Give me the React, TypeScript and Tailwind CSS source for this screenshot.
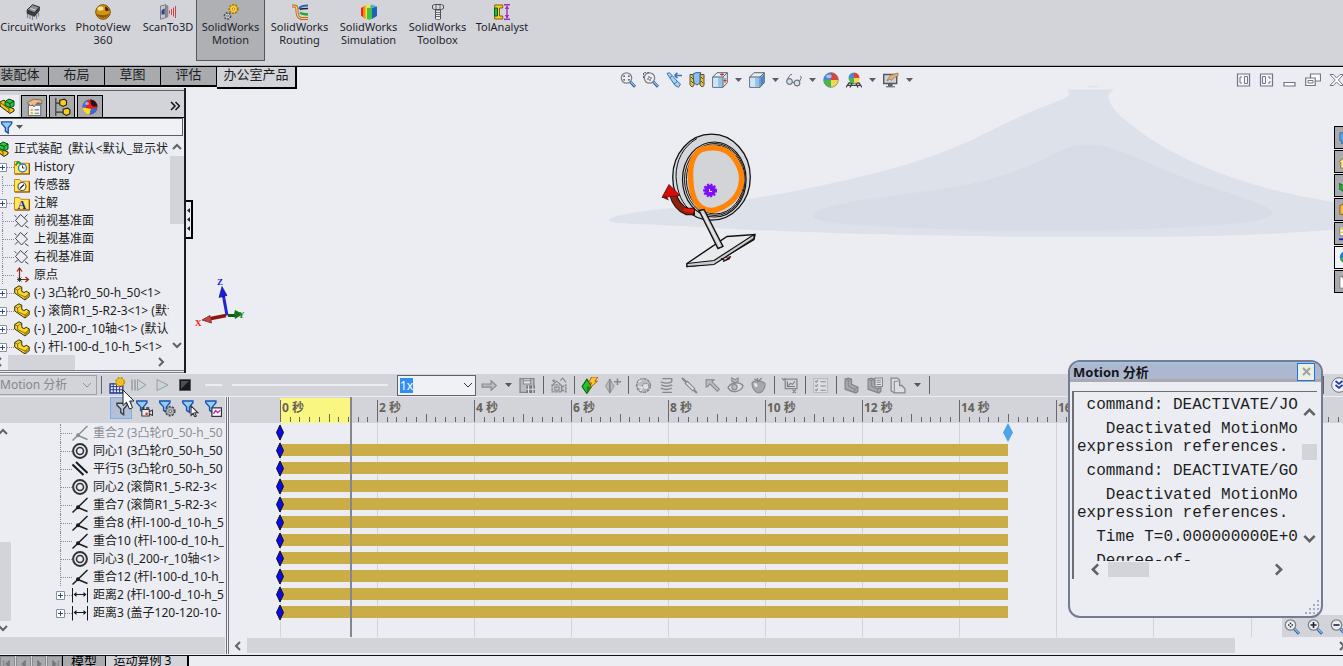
import React from "react";

type Kids = { children?: React.ReactNode };

function Ico({ children, s = 16 }: Kids & { s?: number }) {
  return (
    <svg width={s} height={s} viewBox="0 0 16 16" className="shrink-0" aria-hidden="true">
      {children}
    </svg>
  );
}

const Caret = ({ dark = false }: { dark?: boolean }) => (
  <svg width="7" height="4" viewBox="0 0 7 4" className="shrink-0" aria-hidden="true">
    <path d="M0 0h7L3.5 4z" fill={dark ? "#55575c" : "#5c5e63"} />
  </svg>
);

function Chevron({ dir, s = 10, w = 2, color = "#606267" }: { dir: "u" | "d" | "l" | "r"; s?: number; w?: number; color?: string }) {
  const d = { u: "M1 7l4-4 4 4", d: "M1 3l4 4 4-4", l: "M7 1L3 5l4 4", r: "M3 1l4 4-4 4" }[dir];
  return (
    <svg width={s} height={s} viewBox="0 0 10 10" className="shrink-0" aria-hidden="true">
      <path d={d} fill="none" stroke={color} strokeWidth={w} />
    </svg>
  );
}

/* ---------- shared drawings ---------- */

const Gear = ({ cx, cy, r, fill, edge }: { cx: number; cy: number; r: number; fill: string; edge: string }) => (
  <g>
    <circle cx={cx} cy={cy} r={r} fill={fill} stroke={edge} strokeWidth="1.8" strokeDasharray="1.8 1.2" />
    <circle cx={cx} cy={cy} r={r - 0.5} fill={fill} stroke={edge} strokeWidth=".5" />
    <circle cx={cx} cy={cy} r={r * 0.3} fill="#fff" stroke={edge} strokeWidth=".8" />
  </g>
);

const Funnel = ({ blue = true }: { blue?: boolean }) => (
  <path d="M.7 1h9.600v1.600L7 6.500v5.200L4.300 9.800V6.500L.7 2.600z" fill={blue ? "#8fd0f2" : "#c4cbd9"} stroke={blue ? "#1c50b0" : "#3a3d44"} strokeWidth="1.300" />
);

const Magnifier = ({ children }: Kids) => (
  <Ico>
    <circle cx="6.500" cy="6" r="5.200" fill="#e9eef2" stroke="#7d8288" strokeWidth="1.300" />
    <path d="M10.500 10l4.500 4.700" stroke="#2f5f9e" strokeWidth="2.800" />
    <path d="M10.800 10l4 4.200" stroke="#8fc4ee" strokeWidth="1.200" />
    {children}
  </Ico>
);

const Assembly = () => (
  <Ico>
    <path d="M0 4l4-2 3 3v3l7 3v2l-4 2.500L0 8z" fill="#f0c81e" stroke="#2b2408" />
    <path d="M1 5l8 6 0 3.500" fill="none" stroke="#6b5606" />
    <path d="M5 3.500L9 1l5 2v5l-4 2-5-3z" fill="#28c840" stroke="#0c4514" />
    <path d="M5 3.500l5 2 4-2.500M10 5.500V10" fill="none" stroke="#0c4514" />
  </Ico>
);

const Part = () => (
  <Ico>
    <path d="M.7 3.500L5 .8l2.800 1.400v4.200l2.200 1.200 2.200-1.300 3 1.600v3.800L11 15 .7 8z" fill="#fad62a" stroke="#1e1a08" strokeWidth=".9" />
    <path d="M.7 3.500L3.600 5l4-2.600M3.600 5v3.600L11 12l4.200-3.600M11 12v3" fill="none" stroke="#5b4a08" strokeWidth=".7" />
    <path d="M11.300 12.200l3.600-2.800v2.300l-3.600 2.600z" fill="#b48a08" />
  </Ico>
);

const Folder = ({ children }: Kids) => (
  <Ico>
    <path d="M.5 2.500h5l1.300 1.800H15.500V15H.5z" fill="#ffe95a" stroke="#c98a14" />
    <path d="M15.300 4.500V15H1" fill="none" stroke="#8c4a0c" strokeWidth="1.200" />
    {children}
  </Ico>
);

const Plane = () => (
  <Ico>
    <path d="M6.500 1.500L1.500 7.500l6 6.500 6-6z" fill="none" stroke="#2d2f34" strokeWidth=".9" />
    <path d="M.5 2.500l2 1.500M11 12.500l3.500 2.500M10.500 4.500L13.500 1.500M1 13.500l3-3" fill="none" stroke="#2d2f34" strokeWidth=".9" />
  </Ico>
);

const Ball = ({ children }: Kids) => (
  <Ico>
    <path d="M8 8V.5A7.500 7.500 0 0 1 15.500 8z" fill="#e04038" />
    <path d="M8 8h7.500A7.500 7.500 0 0 1 8 15.500z" fill="#f4d84c" />
    <path d="M8 8v7.500A7.500 7.500 0 0 1 .5 8z" fill="#49b84b" />
    <path d="M8 8H.5A7.500 7.500 0 0 1 8 .5z" fill="#4a86dc" />
    <circle cx="8" cy="8" r="7.300" fill="none" stroke="#6e7f8d" strokeWidth=".7" />
    <ellipse cx="6" cy="4.300" rx="2.800" ry="1.900" fill="#fff" opacity=".5" />
    {children}
  </Ico>
);

const PanelBall = () => (
  <Ico>
    <circle cx="8" cy="8" r="7.500" fill="#e8201c" />
    <path d="M7 .6A7.500 7.500 0 0 0 .5 8.500L4 9c0-3 1-6 3-8.400z" fill="#2f6fe0" />
    <path d="M.5 8.500C1 12.500 4 15.300 7.500 15.500L9 10 4 9z" fill="#f6dc2c" />
    <path d="M9 10l6.300-1c-.5 3.500-3.500 6.500-7.800 6.500z" fill="#2f6fe0" />
    <path d="M8.500.5c4 .3 6.800 3.300 7 7L11 7.500C9 6 8 3 8.500.5z" fill="#2a1212" />
    <ellipse cx="5" cy="4.500" rx="2" ry="1.500" fill="#fff" opacity=".5" />
  </Ico>
);

/* ---------- ribbon ---------- */

const ribbon: { label: string[]; width: string; active?: boolean; icon: React.ReactNode }[] = [
  {
    label: ["CircuitWorks"], width: "w-[66px]",
    icon: (
      <Ico>
        <path d="M2 6L7.500.700 14.500 3 9.500 9z" fill="#8a8c91" stroke="#2c2d30" />
        <path d="M2 6v3.500L9.500 12.500 14.500 6.500V3L9.500 9z" fill="#3b3c40" stroke="#2c2d30" strokeWidth=".6" />
        <path d="M2.500 10v4M5 11v4M7.500 12v4M11.500 11v4M13.500 8.500v4" stroke="#85878c" strokeWidth="1.200" />
        <path d="M5.500 4.500l5 1.500" stroke="#dcdde0" />
      </Ico>
    ),
  },
  {
    label: ["PhotoView", "360"], width: "w-[74px]",
    icon: (
      <Ico>
        <circle cx="8" cy="8" r="7.300" fill="#d29412" stroke="#7c5308" />
        <path d="M1.500 9.500c4 2 9 2 13 0A7 7 0 0 1 1.500 9.500z" fill="#8a5c08" />
        <ellipse cx="5.500" cy="4.500" rx="3" ry="2" fill="#ffe694" />
        <path d="M10 2.500c2 .5 3.500 2 4 4l-3.500.5z" fill="#33220a" />
      </Ico>
    ),
  },
  {
    label: ["ScanTo3D"], width: "w-[56px]",
    icon: (
      <Ico>
        <path d="M.5 2L5.500.700v13L.5 15.300z" fill="#c6c8cd" stroke="#7b7e84" />
        <path d="M5.500.700L8 2v10.500l-2.500 1.500z" fill="#8a8c92" stroke="#7b7e84" strokeWidth=".6" />
        <path d="M1.500 10.500V7.500c0-1.500 1-2.500 3.200-3v6z" fill="#2f4590" />
        <path d="M9.500 6.500v3M11.500 5v6M13.500 3.500v9M15.500 2v12" stroke="#d84048" strokeWidth="1" />
      </Ico>
    ),
  },
  {
    label: ["SolidWorks", "Motion"], width: "w-[69px]", active: true,
    icon: (
      <Ico>
        <Gear cx={10.5} cy={5} r={4.2} fill="#ffd535" edge="#a86a08" />
        <Gear cx={4.5} cy={12} r={3} fill="#e7e8ea" edge="#45474c" />
      </Ico>
    ),
  },
  {
    label: ["SolidWorks", "Routing"], width: "w-[69px]",
    icon: (
      <Ico>
        <path d="M0 2h2.500c2.500 0 2.500 2 2.500 5s1 7.500 5 7.500h6" fill="none" stroke="#b5671a" strokeWidth="3" />
        <path d="M0 2h2.500c2.500 0 2.500 2 2.500 5s1 7.500 5 7.500h6" fill="none" stroke="#f8cf94" strokeWidth="1.200" />
        <path d="M7 5c1-3 4-3.500 9-3.500" fill="none" stroke="#2c62c8" strokeWidth="2" />
        <path d="M8 5.500c2-1 5-1 8-1" fill="none" stroke="#222" strokeWidth="1.500" />
        <path d="M8 8.500c2 2 5 1.500 8 2" fill="none" stroke="#1fa83a" strokeWidth="2.400" />
      </Ico>
    ),
  },
  {
    label: ["SolidWorks", "Simulation"], width: "w-[69px]",
    icon: (
      <Ico>
        <path d="M0 4l2.500-1.500v11L0 11.500z" fill="#e52a1c" />
        <path d="M2 2.700l3-1.400V15l-3-1.500z" fill="#f58a1c" />
        <path d="M4.500 1.500L10 .5v3L6 4v11l-1.500-.5z" fill="#f5e42a" />
        <path d="M6 4l5-.3V15l-3 .8L6 15z" fill="#3fc24a" />
        <path d="M11 3.700l5-1.200V12l-5 3z" fill="#1f63b6" />
        <path d="M10 .5l6 1.700-5 1.500-2-.1z" fill="#35b6c8" />
      </Ico>
    ),
  },
  {
    label: ["SolidWorks", "Toolbox"], width: "w-[69px]",
    icon: (
      <Ico>
        <path d="M2.500 1.500l2-1h7l2 1v3l-2 1h-7l-2-1z" fill="#d5d7da" stroke="#4b4d52" />
        <path d="M5.500 6h5v9l-1 .7h-3l-1-.7z" fill="#eceded" stroke="#4b4d52" />
        <path d="M5.500 8.500h5M5.500 10.500h5M5.500 12.500h5M6 1v4M10 1v4" stroke="#5b5d62" strokeWidth=".9" />
      </Ico>
    ),
  },
  {
    label: ["TolAnalyst"], width: "w-[60px]",
    icon: (
      <Ico>
        <path d="M.7 1h8v3H5.500v8h3.200v3h-8z" fill="#f7d21e" stroke="#8a5a0c" />
        <path d="M.5 4h3v8h-3z" fill="#25b83a" stroke="#0f5c1b" />
        <path d="M10 .8h6M10 15.200h6M13 2v12" stroke="#a42ac0" strokeWidth="1.400" />
        <path d="M10.800 5L13 1.500 15.200 5zM10.800 11l2.200 3.500 2.200-3.500z" fill="#a42ac0" />
      </Ico>
    ),
  },
];

const Ribbon = () => (
  <header className="flex h-[66px] shrink-0 items-start border-b border-[#a9abb0] bg-[#d3d4d9]">
    {ribbon.map((b, i) => (
      <button
        key={i}
        className={`${b.width} flex h-[61px] shrink-0 flex-col items-center pt-1 text-[11px] leading-[13px] text-[#1e1f2c] ${
          b.active ? "border border-t-0 border-[#55575c] bg-[#aeb0b4]" : ""
        }`}
      >
        {b.icon}
        {b.label.map((l) => (
          <span key={l} className="whitespace-nowrap">{l}</span>
        ))}
      </button>
    ))}
  </header>
);

/* ---------- command tabs, view toolbar, window buttons ---------- */

const CommandTabs = () => (
  <nav className="flex shrink-0 items-start text-[13px] leading-[15px] text-[#1e1f24]">
    {["装配体", "布局", "草图", "评估"].map((t, i) => (
      <button
        key={t}
        className={`${i === 0 ? "w-[49px] pr-2" : "w-[56px]"} h-5 border-b-2 border-r border-black bg-[#a8aaae] pb-[3px] whitespace-nowrap`}
      >
        {t}
      </button>
    ))}
    <button className="h-[22px] w-20 border-b-2 border-r-2 border-black bg-[#d3d4d9] pb-[5px] whitespace-nowrap">办公室产品</button>
  </nav>
);

const Cube = ({ sect = false }: { sect?: boolean }) => (
  <Ico>
    <path d="M.7 5L5 .7h10.300v10L11 15.300H.7z" fill="#e4edf4" stroke="#5b6169" />
    <path d="M1.200 5.500h9.300v9.300H1.200z" fill="#8cc4ee" />
    <path d="M1.200 5.500h5v9.300h-5z" fill="#cfe6f6" />
    <path d="M.7 5H11v10.300M11 5l4.300-4.300" fill="none" stroke="#5b6169" />
    {sect ? <path d="M8 2.500h4M10 1v3M13 6v5M11.500 8.500h3" stroke="#c03030" /> : <path d="M11.500 5.500l3.500-3.500v8.500l-3.500 3.700z" fill="#4c86d0" />}
  </Ico>
);

const Monitor = () => (
  <Ico>
    <path d="M.7 2.500h13v9H.7z" fill="#c8d4da" stroke="#54585e" strokeWidth="1.400" />
    <path d="M5.500 12h3.500v2H5.500zM3 14.800h9" fill="#777" stroke="#54585e" />
    <path d="M4 8l4-5 7-2v3l-4 1.500-2.500 3L7 7 4 9z" fill="#e3b07c" stroke="#94602c" strokeWidth=".6" />
  </Ico>
);

const ViewToolbar = () => (
  <div className="flex h-6 min-w-0 flex-1 items-center justify-center gap-[7px] overflow-hidden pt-0.5">
    <button aria-label="整屏显示全图">
      <Magnifier><path d="M4 5V4h1M8 4h1v1M9 7v1H8M5 8H4V7" fill="none" stroke="#44474c" strokeWidth="1.200" /></Magnifier>
    </button>
    <button aria-label="局部放大">
      <Magnifier><path d="M.5 6V.7h6M5 5h3v3H5z" fill="none" stroke="#54575c" strokeDasharray="2 1" /></Magnifier>
    </button>
    <button aria-label="上一视图">
      <Ico>
        <path d="M1 1.500L3.500.700l8 8.800 3 2.500-2 3.300-3.500-1.800z" fill="#a7d3f3" stroke="#3b74b0" />
        <path d="M3.500 6l2.500-2M8 12l4-3" stroke="#3b74b0" />
        <path d="M8.500 3.500H16M8.500 3.500l3-2.700M8.500 3.500l3 2.700" fill="none" stroke="#3e6fc0" strokeWidth="1.600" />
      </Ico>
    </button>
    <button aria-label="剖面视图">
      <Ico>
        <path d="M1 2.500h4v11l-2 1.500-2-2z" fill="#f0c22c" stroke="#4f5055" />
        <path d="M11 2.500h4v11l-2 1.500-2-2z" fill="#f0c22c" stroke="#4f5055" />
        <path d="M4 2l3-1.300h5L11 2v9l-3 2-3-2z" fill="#8fc0ec" stroke="#355f97" />
        <path d="M2 5l2 2M2 9l2 2M12 5l2 2M12 9l2 2" stroke="#3b3520" strokeWidth=".8" />
      </Ico>
    </button>
    <button aria-label="视图定向" className="flex items-center gap-[7px]"><Cube sect /><Caret /></button>
    <button aria-label="显示样式" className="flex items-center gap-[7px]"><Cube /><Caret /></button>
    <button aria-label="隐藏项目" className="flex items-center gap-[7px]">
      <Ico>
        <circle cx="3.500" cy="9.500" r="2.800" fill="#d4e4ec" stroke="#6f757c" strokeWidth="1.200" />
        <circle cx="11" cy="11" r="2.800" fill="#d4e4ec" stroke="#6f757c" strokeWidth="1.200" />
        <path d="M6 10l2.500.5M1.500 7l3-4.500h1.500M13.500 9.500L15.500 5l-1.500-1" fill="none" stroke="#6f757c" />
      </Ico>
      <Caret />
    </button>
    <button aria-label="编辑外观"><Ball /></button>
    <button aria-label="应用布景" className="flex items-center gap-[7px]">
      <Ico>
        <path d="M0 15.500l3-4.500h10l3 4.500M4 15.500l2-4M12 15.500l-2-4M1.500 13.300h13" stroke="#3e4045" strokeWidth="1.300" fill="none" />
        <path d="M8 6V.5A5.500 5.500 0 0 1 13.500 6z" fill="#e04038" />
        <path d="M8 6h5.500A5.500 5.500 0 0 1 8 11.500z" fill="#f4d84c" />
        <path d="M8 6v5.500A5.500 5.500 0 0 1 2.500 6z" fill="#49b84b" />
        <path d="M8 6H2.500A5.500 5.500 0 0 1 8 .5z" fill="#4a86dc" />
      </Ico>
      <Caret />
    </button>
    <button aria-label="视图设定" className="flex items-center gap-[7px]"><Monitor /><Caret /></button>
  </div>
);

const WindowButtons = () => (
  <div className="-mr-px flex h-6 shrink-0 items-center gap-[7px] pt-0.5">
    {["M4 5L6 5M4 5v6h2M8.500 4.500h3v7h-3z", "M3.500 4.500h3v7h-3zM9 5h2v2M9 11h2V9"].map((d, i) => (
      <button key={i} aria-label={i ? "右侧窗格" : "左侧窗格"}>
        <Ico><path d="M1.500 2h12v12h-12z" fill="#f6f7fa" stroke="#707488" strokeWidth="1.200" /><path d={d} fill="none" stroke="#707488" /></Ico>
      </button>
    ))}
    <button aria-label="最小化"><Ico><path d="M2 10.500h11v3.500H2z" fill="#fff" stroke="#707488" strokeWidth="1.200" /></Ico></button>
    <button aria-label="还原">
      <Ico><path d="M5.500 2h10v7h-10z" fill="#fff" stroke="#707488" strokeWidth="1.200" /><path d="M.7 6h9.500v7.500H.7z" fill="#fff" stroke="#707488" strokeWidth="1.200" /><path d="M3 8.500h5V11H3z" fill="none" stroke="#707488" /></Ico>
    </button>
    <button aria-label="关闭">
      <Ico><path d="M2 2.500h3.500L8.500 6l3.500-3.500H15.500L10.300 8l5.200 5.500h-3.500L8.500 10l-3 3.500H2L7.200 8z" fill="#fff" stroke="#707488" /></Ico>
    </button>
  </div>
);

/* ---------- graphics area ---------- */

const Scene = () => (
  <svg className="absolute inset-0 h-full w-full" viewBox="0 66 1343 307" preserveAspectRatio="xMidYMid slice" aria-label="三维模型">
    <path
      d="M1067 89h48q-9 4-6 10c3 10 12 18 26 28 16 13 36 24 57 34 40 18 84 32 151 42v25c-40 5-140 9-250 8.500-130 0-290-3-431-12-26-1-53-1-53-5 0-4 25-8 53-11 60-6 90-10 128-17 60-12 110-24 142-36 40-14 62-28 85-38C1045 104 1068 99 1069 94q0-4-2-5z"
      fill="#dde1ea"
    />
    <path
      d="M1088 144c-22 0-34 11-52 18-30 14-65 23-105 28-60 8-118 15-118 26 0 7 60 12 213 14 150 0 246-6 246-17 0-9-40-19-80-33-48-17-74-36-104-36z"
      fill="#d8dce6"
    />
    <ellipse cx="1093" cy="86" rx="6" ry="1" fill="#e2e5ed" />

    {/* cam wheel */}
    <g stroke="#111" strokeWidth="1.300" fill="#d6d7da">
      <ellipse cx="711.500" cy="176.700" rx="38.800" ry="43" />
      <path d="M697 138c-14 8-21 22-21 38 1 16 6 28 16 35" fill="none" strokeWidth="1" />
      <ellipse cx="714.300" cy="179" rx="31.800" ry="37.500" strokeWidth="1.200" />
      <ellipse cx="714.800" cy="179" rx="30.300" ry="36" strokeWidth="1" />
      <ellipse cx="715.200" cy="179" rx="28.800" ry="34.500" strokeWidth="1" />
    </g>
    <path
      d="M690.500 173c0-14 6-22 11-24 7-3 18-2 24 1 8 4 15 16 16 25 1 8-1 14-5 20-5 7-9 10-17 13-6 3-13 2-18-1-8-5-11-18-11-34z"
      fill="#d3d4d8" stroke="#ff8408" strokeWidth="5.500"
    />
    <g fill="#7d10f5">
      <circle cx="710" cy="190" r="5.800" />
      <circle cx="710" cy="190" r="6" fill="none" stroke="#7d10f5" strokeWidth="2" strokeDasharray="2 1.500" />
      <path d="M709.500 188.500v2.500h2.500" fill="none" stroke="#e8dcff" strokeWidth="1" />
    </g>
    {/* rotation arrow */}
    <path d="M673 194c2 8 7 14 14 17h8" fill="none" stroke="#2c0b08" strokeWidth="7.500" />
    <path d="M673 194c2 8 7 14 14 17h6" fill="none" stroke="#8b2214" strokeWidth="5.500" />
    <path d="M684 209q5 2 10 1" fill="none" stroke="#f01408" strokeWidth="3.500" />
    <path d="M669 184l11 11-18 2z" fill="#d80b0b" stroke="#5a0606" strokeWidth=".8" />
    <path d="M662 197l7 3-2-4z" fill="#6a1208" />
    {/* follower rod and base plate */}
    <path d="M687 263l40-27 28-2-1 5-40 24-27 3z" fill="#e9eaec" stroke="#111" strokeWidth="1.400" />
    <path d="M687 263l27-3 40-26v4l-40 26-27 2z" fill="#cccdd0" stroke="#111" strokeWidth="1.200" />
    <path d="M721 258l4 2 6-4M723 261l7-3" stroke="#111" fill="none" strokeWidth="1.300" />
    <path d="M726 257l5-1" stroke="#8a3030" />
    <path d="M699 210l5-1 19 37-5 2z" fill="#d0d1d4" stroke="#111" strokeWidth="1.400" />
    <path d="M703 213l17 33" stroke="#f3f3f4" strokeWidth="1" />

    {/* axis triad */}
    <g>
      <path d="M227 315l-4-22" stroke="#2424d0" strokeWidth="3" />
      <path d="M222 286l5 9-8 2z" fill="#1c1ce0" stroke="#0a0a70" strokeWidth=".6" />
      <path d="M226 315l-15 3" stroke="#8c1408" strokeWidth="3.500" />
      <path d="M202 319.500l8-4.500 1.500 7.500z" fill="#c04a3c" stroke="#6a1008" strokeWidth=".7" />
      <path d="M228 315h7" stroke="#0c5a14" strokeWidth="3" />
      <path d="M243 313.500l-8-4-1 4.500 1 4.500z" fill="#16701c" />
      <g fontFamily="Liberation Serif, serif" fontSize="9" fontWeight="700">
        <text x="217" y="284" fill="#1414f0">Z</text>
        <text x="195" y="325" fill="#f01414">X</text>
        <text x="238" y="317" fill="#128a1c">Y</text>
      </g>
    </g>
  </svg>
);

/* ---------- feature tree ---------- */

type Feature = { label: string; icon: React.ReactNode; plus?: boolean };

const features: Feature[] = [
  {
    label: "History", plus: true,
    icon: <Folder><circle cx="8.500" cy="9" r="4" fill="#fff" stroke="#3b7ab0" strokeWidth="1.400" /><path d="M8.500 6.500V9h2" fill="none" stroke="#234" /><path d="M1.500 6.500L4 3l3 2" fill="none" stroke="#1c9a3a" strokeWidth="1.800" /></Folder>,
  },
  {
    label: "传感器",
    icon: <Folder><circle cx="8" cy="9.500" r="4" fill="#fff" stroke="#55585e" strokeWidth="1.200" /><path d="M6 11.500l4-4" stroke="#222" strokeWidth="1.200" /></Folder>,
  },
  {
    label: "注解", plus: true,
    icon: <Folder><text x="3.500" y="13.500" fontFamily="Liberation Serif, serif" fontWeight="700" fontSize="12" fill="#1426b4">A</text></Folder>,
  },
  { label: "前视基准面", icon: <Plane /> },
  { label: "上视基准面", icon: <Plane /> },
  { label: "右视基准面", icon: <Plane /> },
  {
    label: "原点",
    icon: (
      <Ico>
        <path d="M5.500 12V2M5.500 12.500H14" stroke="#8c2414" strokeWidth="1.200" />
        <path d="M3 4.500l2.500-3.500L8 4.500M11.500 10l3 2.500-3 2.500" fill="none" stroke="#8c2414" strokeWidth="1.200" />
        <path d="M3.500 10.500l4 4M7.500 10.500l-4 4M5.500 10v5M3 12.500h5" stroke="#222" strokeWidth=".8" />
      </Ico>
    ),
  },
  { label: "(-) 3凸轮r0_50-h_50<1>", plus: true, icon: <Part /> },
  { label: "(-) 滚筒R1_5-R2-3<1> (默认", plus: true, icon: <Part /> },
  { label: "(-) l_200-r_10轴<1> (默认", plus: true, icon: <Part /> },
  { label: "(-) 杆l-100-d_10-h_5<1>", plus: true, icon: <Part /> },
];

const Plus = () => (
  <svg width="9" height="9" viewBox="0 0 9 9" className="shrink-0" aria-hidden="true">
    <path d="M.5.5h8v8h-8z" fill="#fff" stroke="#8f9198" />
    <path d="M2 4.500h5M4.500 2v5" stroke="#2c4c9c" />
  </svg>
);

const panelTabs: { name: string; icon: React.ReactNode }[] = [
  {
    name: "属性",
    icon: <Ico s={18}><path d="M3 5h11v10.500H3z" fill="#f4f5f8" stroke="#6d7078" /><path d="M3 5h11v2H3z" fill="#5f7fc0" /><path d="M5 9.500h2v2H5zM5 12.500h2v2H5z" fill="#e6b63a" /><path d="M8.500 10.500h4M8.500 13.500h4" stroke="#777" /><path d="M2 4l6-3 7 1v3l-4-1-3 4-1-2-2 1z" fill="#e9bd8a" stroke="#8a5a28" strokeWidth=".7" /></Ico>,
  },
  {
    name: "配置",
    icon: <Ico s={18}><path d="M2.500 0v16M2.500 4.500H6M2.500 12.500H9" stroke="#333" /><path d="M6 2l4-1 2 1.500V6L9 7.500 6 6zM9 10l4-1 2 1.500V14l-3 1.500L9 14z" fill="#f6cf22" stroke="#2a2206" /></Ico>,
  },
  { name: "外观", icon: <PanelBall /> },
];

const FeaturePanel = () => (
  <aside className="flex w-[186px] shrink-0 flex-col border-r-2 border-[#1c1d20] bg-[#ecedf2]">
    <div className="border-b border-[#606267] bg-[#d3d4d9] pt-0.5" />
    <div className="flex h-[27px] shrink-0 items-end gap-0.5 border-b border-black bg-[#d3d4d9]">
      <button aria-label="特征" className="flex h-[22px] w-[19px] items-center overflow-hidden bg-[#ecedf2]"><Assembly /></button>
      {panelTabs.map((t) => (
        <button key={t.name} aria-label={t.name} className="flex h-[22px] w-[26px] items-center justify-center border border-b-0 border-black bg-[#a8aaae]">
          {t.icon}
        </button>
      ))}
      <button aria-label="展开" className="mb-1.5 ml-auto pr-1">
        <svg width="10" height="10" viewBox="0 0 10 10"><path d="M1 1l4 4-4 4M5.500 1l4 4-4 4" fill="none" stroke="#111" strokeWidth="1.500" /></svg>
      </button>
    </div>
    <label className="mr-px flex h-[18px] shrink-0 items-center gap-0.5 border border-l-0 border-[#5b5d63] bg-[#f0f1f5]">
      <Ico s={14}><g transform="translate(1 1) scale(1.200)"><Funnel /></g></Ico>
      <Caret dark />
      <input aria-label="过滤器" className="min-w-0 flex-1 bg-transparent text-xs outline-none" />
    </label>
    <div className="flex min-h-0 flex-1 overflow-hidden pt-1">
      <ul className="min-w-0 flex-1 overflow-hidden text-xs leading-[18px] text-[#1c1d22]">
        <li className="flex h-[18px] items-center">
          <span className="-ml-1.5 mr-1 shrink-0"><Assembly /></span>
          <span className="whitespace-pre">{"正式装配  (默认<默认_显示状"}</span>
        </li>
        {features.map((f) => (
          <li key={f.label} className="flex h-[18px] items-center">
            <span className="flex w-3.5 shrink-0 items-center">
              {f.plus ? <span className="-ml-0.5 flex"><Plus /></span> : <span className="ml-0.5 h-[18px] w-px border-l border-dotted border-[#8a8c92]" />}
              <span className="h-px flex-1 border-t border-dotted border-[#8a8c92]" />
            </span>
            {f.icon}
            <span className="ml-1 whitespace-pre">{f.label}</span>
          </li>
        ))}
      </ul>
      <div className="flex w-[15px] shrink-0 flex-col items-center pt-0.5">
        <Chevron dir="u" />
        <div className="mt-1 h-[68px] w-3.5 bg-[#d3d4d9]" />
        <div className="mt-auto pb-1"><Chevron dir="d" /></div>
      </div>
    </div>
    <div className="flex h-4 shrink-0 items-center">
      <span className="-ml-1.5"><Chevron dir="l" /></span>
      <div className="ml-1 h-[15px] w-[67px] bg-[#d3d4d9]" />
      <span className="mr-[18px] ml-auto"><Chevron dir="r" /></span>
    </div>
    <div className="h-[3px] shrink-0 border-y border-[#7c7f88]" />
  </aside>
);

const TaskPane = () => {
  const tabs = [
    <path key="0" d="M1 2h12v9H6l-3 4v-4H1z" fill="#5aa4e6" stroke="#2f6cae" />,
    <path key="1" d="M0 8l8-7 8 7M2 8v7h12V8" fill="#f8e8a0" stroke="#8a6a14" />,
    <path key="2" d="M0 5l6 3 6-4v8l-6 3-6-4z" fill="#2aa83c" stroke="#0c5a18" />,
    <path key="3" d="M1 3l4-2h10v12H1z" fill="#f2b840" stroke="#8a5408" />,
    <g key="4"><path d="M1 0h14v10H1z" fill="#fff" stroke="#777" /><path d="M2 2h4M2 6h4" stroke="#e6d020" strokeWidth="2" /><path d="M0 14h14" stroke="#1414c0" strokeWidth="2" /></g>,
    <g key="5"><circle cx="8" cy="7" r="7" fill="#2c7ad8" /><path d="M1 8l6-1 3 6-4 2z" fill="#38b040" /></g>,
    <g key="6"><path d="M1 2h13v13H1z" fill="#fff" stroke="#777" /><path d="M4 1h6v3H4z" fill="#8a5a38" /></g>,
  ];
  return (
    <aside className="mt-[38px] ml-auto flex w-[9px] shrink-0 flex-col gap-px self-start overflow-hidden">
      {tabs.map((t, i) => (
        <button key={i} aria-label={`任务窗格 ${i + 1}`} className={`flex h-[23px] items-center border-t border-b border-l border-black pl-1 ${i === 5 ? "bg-[#f2f3f6]" : "bg-[#a8aaae]"}`}>
          <Ico s={14}>{t}</Ico>
        </button>
      ))}
    </aside>
  );
};

/* ---------- motion study ---------- */

const Sep = () => (
  <span className="flex w-2 shrink-0 justify-center"><span className="h-[18px] w-px bg-[#606267]" /></span>
);

const ToolBtn = ({ name, children }: Kids & { name: string }) => (
  <button aria-label={name} className="flex w-[23px] shrink-0 justify-center"><Ico s={17}>{children}</Ico></button>
);

const g = "#85878c";
const gl = "#b9bcc2";
const Steps = ({ fill }: { fill: string }) => (
  <>
    <path d="M2 2l3-1 3 1v5l6 2.500v4L12 15 2 11.500z" fill={fill} stroke={g} strokeWidth="1.200" />
    <path d="M2 2l3 1.500v5l6 3V15M5 3.500L8 2M11 11.500l3-2" fill="none" stroke={g} />
  </>
);

const MotionToolbar = () => (
  <div className="mt-px flex h-[22px] shrink-0 items-center overflow-hidden bg-[#d3d4d9]">
    <div className="relative flex h-5 w-[97px] shrink-0 items-center border border-l-0 border-[#a0a2a7]">
      <select aria-label="算例类型" disabled className="h-full w-full appearance-none text-xs text-[#85878c] opacity-100">
        <option>Motion 分析</option>
      </select>
      <span className="pointer-events-none absolute right-1"><Chevron dir="d" w={1} color="#909297" /></span>
    </div>
    <Sep />
    <button aria-label="计算" className="ml-1 flex w-4 shrink-0">
      <Ico s={17}>
        <path d="M1 6.500h12V15H1z" fill="#e6ecfa" stroke="#22348c" strokeWidth="1.300" />
        <path d="M1 9h12M1 12h12M4 6v9M7 6v9M10 6v9" stroke="#22348c" strokeWidth=".9" />
        <Gear cx={10.5} cy={4.7} r={3.8} fill="#ffd020" edge="#c08a08" />
      </Ico>
    </button>
    <button aria-label="从头播放" className="ml-1.5 flex w-4 shrink-0">
      <Ico><path d="M1 2.500v11M4 2.500v11" stroke="#9a9ca2" strokeWidth="1.500" /><path d="M6.500 2.500L15 8l-8.500 5.500z" fill="#c6d4dc" stroke="#9a9ca2" /></Ico>
    </button>
    <button aria-label="播放" className="ml-2 flex w-4 shrink-0">
      <Ico><path d="M2 2.500L13 8l-11 5.500z" fill="#c6d4dc" stroke="#9a9ca2" /></Ico>
    </button>
    <button aria-label="停止" className="ml-1.5 flex w-4 shrink-0">
      <Ico><path d="M2.500 2.500h11v11h-11z" fill="#17181a" stroke="#55575c" /><path d="M4 12l8-8H4z" fill="#4c4e53" /></Ico>
    </button>
    <span className="ml-3 h-0.5 w-[17px] shrink-0 bg-[#ecedf2]" />
    <input
      type="range"
      aria-label="时间"
      className="mr-[9px] ml-2.5 h-0.5 w-[156px] shrink-0 appearance-none bg-[#ecedf2] [&::-webkit-slider-thumb]:appearance-none"
    />
    <div className="flex h-[21px] w-[79px] shrink-0 items-center border border-[#606267] bg-[#f0f1f5] pl-0.5">
      <button aria-label="播放速度" className="flex w-full items-center justify-between pr-0.5">
        <span className="bg-[#2f8ff4] text-xs leading-[15px] text-white">1x</span>
        <Chevron dir="d" w={1} color="#333" />
      </button>
    </div>
    <span className="w-0.5 shrink-0" />
    <ToolBtn name="播放模式"><path d="M1 6.500h8.500V3.500L14.500 8l-5 4.500V9.500H1z" fill={gl} stroke={g} /></ToolBtn>
    <button aria-label="播放模式选项" className="flex w-[15px] shrink-0 justify-center"><Caret dark /></button>
    <ToolBtn name="保存动画">
      <path d="M1 1.500h13v13H1z" fill={gl} stroke={g} strokeWidth="1.300" /><path d="M4 1.500h7v5H4zM4 3.500h7" fill="#dfe1e4" stroke={g} /><path d="M7 8h8v7H7z" fill="#77797e" /><path d="M9 8v7M13 8v7M7 11.500h8" stroke="#e6e7ea" />
    </ToolBtn>
    <Sep />
    <ToolBtn name="动画向导">
      <path d="M2 7.500h9V14H2zM11 9.500l4-2V14l-4-2z" fill="#c8cacf" stroke={g} strokeDasharray="2.500 .7" strokeWidth="1.200" /><path d="M3 7l3-3 4 3M4.500 9.500h4v3h-4zM9.500 3.500L12 1l3 4M2 3.500h3M3.500 2v3" stroke={g} fill="none" />
    </ToolBtn>
    <Sep />
    <ToolBtn name="自动键码">
      <path d="M5.500 2L10 9l-4.500 6.500L1 9z" fill="#1fc42c" stroke="#0b5a12" /><path d="M5.500 9v6.500L10 9z" fill="#0d8a1a" /><path d="M10 0h6l-3 4h2.500L8 10.500l2-5H7z" fill="#ffc81c" stroke="#a84c08" strokeWidth=".8" />
    </ToolBtn>
    <ToolBtn name="添加键码"><path d="M5.500 2l4 6.500-4 6.500-4-6.500z" fill={gl} stroke="#9a9ca2" /><path d="M5.500 2v13M9.500 4.500h6.500M12.700 1.500v6" stroke={g} strokeWidth="1.500" /></ToolBtn>
    <Sep />
    <ToolBtn name="马达">
      <circle cx="8" cy="8" r="6.500" fill={gl} stroke={g} strokeWidth="1.300" strokeDasharray="3 .8" /><circle cx="10" cy="9" r="3" fill="#dde0e4" stroke={g} strokeDasharray="1.500 .8" /><path d="M3 5l3-2M3 9l4 1M5 13l2-3" stroke="#f2f3f5" />
    </ToolBtn>
    <ToolBtn name="弹簧">
      <path d="M4 1.500h9M3 4.500c3 1.500 7 1.500 10 0M3 7.500c3 1.500 7 1.500 10 0M3 10.500c3 1.500 7 1.500 10 0M4 14.500h9M13 1.500v3M3 4.500v1M13 7.500v1M3 10.500v1" fill="none" stroke={g} strokeWidth="1.300" />
    </ToolBtn>
    <ToolBtn name="阻尼"><path d="M1 1l4 4M11 11l4 4" stroke={g} strokeWidth="2" /><path d="M4 6l2-2 7 7-2 2z" fill="#e0e2e5" stroke={g} /></ToolBtn>
    <ToolBtn name="力"><path d="M2 2.500h7.500L7.500 4.500l7 7-2 2-7-7L4 8.500 2 9.500z" fill={gl} stroke={g} /></ToolBtn>
    <ToolBtn name="接触">
      <path d="M4.500 1l3 1.500 3-1.500v3l-3 1.500-3-1.500z" fill={gl} stroke={g} /><path d="M1 10c2-5 11-6 14-2-1 6-11 8-14 2z" fill="#d9dbdf" stroke={g} strokeWidth="1.300" /><circle cx="7" cy="9.500" r="2.500" fill={gl} stroke={g} />
    </ToolBtn>
    <ToolBtn name="引力"><path d="M2 5c2-2 9-2 12 1 1 6-4 9-6 9s-7-4-6-10z" fill="#a5a8ae" stroke={g} /><path d="M4 6c1-1 3 0 3 2s-2 2-3 0z" fill="#e4e6e9" /><path d="M7 5V1M4 2l4 2 3-3" stroke={g} fill="none" strokeWidth="1.300" /></ToolBtn>
    <Sep />
    <ToolBtn name="结果和图解"><path d="M4 2h11v9H4zM1 1l1.500 2M2.500 3L4 1M11 12l3 3M14 12l-3 3" fill="none" stroke={g} strokeWidth="1.200" /><path d="M6 4v5h7M7 8l2-2 2 1 2-3" fill="none" stroke="#77797e" /></ToolBtn>
    <Sep />
    <ToolBtn name="运动算例属性"><path d="M1.500 1.500h13v13h-13z" fill="#dddfe3" stroke={gl} /><path d="M3 4l1 1 1.500-2M3 8l1 1 1.500-2M3 12l1 1 1.500-2M8 4.500h5M8 8.500h5M8 12.500h5" fill="none" stroke={g} /></ToolBtn>
    <Sep />
    <ToolBtn name="模拟"><Steps fill="#a5a8ae" /></ToolBtn>
    <ToolBtn name="模拟设定"><Steps fill="#a5a8ae" /><path d="M8.500 1h7v8h-7z" fill="#e2e3e6" stroke={g} /><path d="M10 3h4M10 5h4M10 7h4" stroke={g} /></ToolBtn>
    <ToolBtn name="模拟显示"><path d="M2 1h6l2 2v5h2l3 3v4H5l-3-2z" fill="#dcdee1" stroke={g} strokeWidth="1.200" /><path d="M5 4v11M5 4h4" stroke={g} fill="none" /></ToolBtn>
    <button aria-label="模拟选项" className="flex w-4 shrink-0 justify-center"><Caret dark /></button>
    <Sep />
    <span className="ml-auto"><Sep /></span>
    <button aria-label="折叠" className="-mr-1 ml-1 flex shrink-0">
      <Ico><circle cx="8" cy="8" r="7.300" fill="#eef2fa" stroke="#6e7382" /><path d="M4.500 4L8 7l3.500-3M4.500 8L8 11l3.500-3" fill="none" stroke="#1c3cae" strokeWidth="1.700" /></Ico>
    </button>
  </div>
);

const MateIcon = ({ kind, dim }: { kind: string; dim?: boolean }) => {
  const c = dim ? "#8c8e93" : "#1a1b1e";
  return (
    <Ico>
      {kind === "重合" && (<><path d="M.5 15.500L15.500 1" stroke={c} strokeWidth="1.500" /><path d="M6 10.500l9.500 4" stroke={c} strokeWidth="1.500" /><circle cx="6" cy="10.300" r="2" fill={c} /></>)}
      {kind === "同心" && (<><circle cx="8" cy="8" r="6.900" fill="none" stroke="#303236" strokeWidth="2" /><circle cx="8" cy="8" r="3.500" fill="none" stroke="#303236" strokeWidth="1.600" /></>)}
      {kind === "平行" && <path d="M.5 3.500L11.500 14M4 1l11.500 11" stroke={c} strokeWidth="2" />}
      {kind === "距离" && (<><path d="M.5 1v14.500M15.500 1v14.500M2 7.500h12" stroke={c} strokeWidth="1" /><path d="M1.500 7.500l3-2.500v5zM14.500 7.500l-3-2.500v5z" fill={c} /></>)}
    </Ico>
  );
};

const mates = [
  { kind: "重合", n: "2", of: "(3凸轮r0_50-h_50", dim: true },
  { kind: "同心", n: "1", of: "(3凸轮r0_50-h_50" },
  { kind: "平行", n: "5", of: "(3凸轮r0_50-h_50" },
  { kind: "同心", n: "2", of: "(滚筒R1_5-R2-3<" },
  { kind: "重合", n: "7", of: "(滚筒R1_5-R2-3<" },
  { kind: "重合", n: "8", of: "(杆l-100-d_10-h_5" },
  { kind: "重合", n: "10", of: "(杆l-100-d_10-h_" },
  { kind: "同心", n: "3", of: "(l_200-r_10轴<1>" },
  { kind: "重合", n: "12", of: "(杆l-100-d_10-h_" },
  { kind: "距离", n: "2", of: "(杆l-100-d_10-h_5", plus: true },
  { kind: "距离", n: "3", of: "(盖子120-120-10-", plus: true },
];

const filters: { name: string; on?: boolean; extra: React.ReactNode }[] = [
  { name: "无过滤", on: true, extra: null },
  { name: "过滤动画", extra: <g><path d="M5.500 9h7v6h-7zM12.500 11l3-1.500v5l-3-1.500z" fill="#e8e9ec" stroke="#33353a" /><path d="M5 7.500h3M9.500 7.500h3" stroke="#33353a" strokeWidth="1.500" /><path d="M9 13h2" stroke="#e02020" strokeWidth="2" /></g> },
  { name: "过滤驱动", extra: <Gear cx={10.5} cy={10.5} r={4.2} fill="#b4b7bc" edge="#45474c" /> },
  { name: "过滤选定", extra: <path d="M8.500 5.500v9l2-2 1.500 3.300 1.500-.7L12 12h3z" fill="#fff" stroke="#33353a" /> },
  { name: "过滤结果", extra: <g><path d="M6.500 7.500h9v8h-9z" fill="#fff" stroke="#33353a" strokeWidth="1.200" /><path d="M8 13l2-3 2 2 2.500-2.500" fill="none" stroke="#c020c0" strokeWidth="1.200" /></g> },
];

const MateTree = () => (
  <div className="flex w-[225px] shrink-0 flex-col">
    <div className="flex h-[26px] shrink-0 items-start gap-px bg-[#d3d4d9] pl-[110px]">
      {filters.map((f) => (
        <button key={f.name} aria-label={f.name} className={`flex h-[22px] w-[22px] items-center justify-center ${f.on ? "border border-[#6fb2ec] bg-[#b2bfd6]" : ""}`}>
          <Ico s={17}><g transform={f.on ? "translate(3 2)" : "translate(0 0)"}><Funnel blue={!f.on} /></g>{f.extra}</Ico>
        </button>
      ))}
    </div>
    <div className="flex h-[214px]">
      <div className="flex w-[11px] shrink-0 flex-col items-center pt-1">
        <span className="-ml-1.5"><Chevron dir="u" /></span>
        <div className="mt-auto h-[79px] w-full bg-[#d3d4d9]" />
        <div className="-ml-1.5 pt-0.5 pb-1"><Chevron dir="d" /></div>
      </div>
      <ul className="min-w-0 flex-1 overflow-hidden pt-px pl-[45px] text-xs leading-[18px] text-[#1c1d22]">
        {mates.map((m, i) => (
          <li key={i} className={`flex h-[18px] items-center ${m.dim ? "text-[#8c8e93]" : ""}`}>
            <span className="flex w-4 shrink-0 items-center">
              {m.plus ? <Plus /> : <span className="ml-1 h-[18px] w-px border-l border-dotted border-[#8a8c92]" />}
              <span className="h-px flex-1 border-t border-dotted border-[#8a8c92]" />
            </span>
            <MateIcon kind={m.kind} dim={m.dim} />
            <span className="ml-[5px] whitespace-nowrap">{m.kind}{m.n} {m.of}</span>
          </li>
        ))}
      </ul>
    </div>
    <div className="h-[17px] bg-[#d3d4d9]" />
  </div>
);

const X0 = 50;
const SEC = 48.525;
const ticks = Array.from({ length: 120 }, (_, i) => i);
const evens = Array.from({ length: 12 }, (_, i) => i * 2);
const labelled = evens.filter((s) => s <= 16);

const Ruler = () => (
  <svg className="block h-[26px] w-full bg-[#d3d4d9]" aria-label="时间标尺">
    <rect x={X0} y="1" width="71" height="25" fill="#faf682" />
    {ticks.map((t) => {
      const x = Math.round(X0 + (t * SEC) / 5) + 0.5;
      const top = t % 10 === 0 ? 3 : t % 5 === 0 ? 17 : 20;
      return <path key={t} d={`M${x} ${top}V25`} stroke="#66686d" />;
    })}
    {labelled.map((s) => (
      <text key={s} x={Math.round(X0 + s * SEC) + 2} y="15" fontSize="12" fontWeight="700" fill="#67635c">{s === 16 ? s : `${s} 秒`}</text>
    ))}
    <path d="M121 0v26" stroke="#85878c" strokeWidth="2" />
  </svg>
);

const Timeline = () => (
  <svg className="block h-[214px] w-full" aria-label="时间线">
    {evens.map((s) => (
      <path key={s} d={`M${Math.round(X0 + s * SEC) + 0.5} 0V214`} stroke="#d3d4d9" />
    ))}
    {mates.map((m, i) => (
      <g key={i}>
        {!m.dim && <rect x={X0 + 1} y={i * 18 + 3} width="727" height="12" fill="#cbad48" />}
        <path d={`M${X0} ${i * 18 + 2}l3.500 7.500-3.500 7.500-3.500-7.500z`} fill="#0a0af0" stroke="#101010" />
      </g>
    ))}
    <path d="M778 0l5 9.500-5 9.500-5-9.500z" fill="#4fa4e8" />
    <path d="M121 0v214" stroke="#85878c" strokeWidth="2" />
  </svg>
);

const MotionStudy = () => (
  <section className="shrink-0">
    <MotionToolbar />
    <div className="mt-px flex">
      <MateTree />
      <div className="mr-px ml-px w-[3px] shrink-0 border-x border-[#6c6f7c] bg-[#f4f5f8]" />
      <div className="min-w-0 flex-1">
        <Ruler />
        <div className="relative">
          <Timeline />
          <div className="absolute right-0 bottom-0 flex h-[22px] gap-[7px] overflow-hidden bg-[#d3d4d9] pt-0.5 pl-0.5">
            <button aria-label="整屏显示"><Magnifier><path d="M6.500 3.500v5M4 6h5" stroke="#333" strokeDasharray="1.500 2" strokeWidth="1.400" /></Magnifier></button>
            <button aria-label="放大"><Magnifier><path d="M6.500 3v6M3.500 6h6" stroke="#223" strokeWidth="1.600" /></Magnifier></button>
            <button aria-label="缩小" className="-mr-[3px]"><Magnifier><path d="M3.500 6h6" stroke="#223" strokeWidth="1.600" /></Magnifier></button>
          </div>
        </div>
        <div className="flex h-[17px] items-center">
          <span className="w-[17px] pl-[3px]"><Chevron dir="l" /></span>
          <div className="mr-[102px] h-[15px] flex-1 bg-[#d3d4d9]" />
          <span className="-mr-1"><Chevron dir="r" /></span>
        </div>
      </div>
    </div>
    <div className="mt-px flex h-[11px] items-start overflow-hidden border-t border-[#111]">
      <div className="flex w-[62px] shrink-0 gap-px bg-[#d3d4d9]">
        {["M9 3L5 7l4 4zM3 3v8", "M9 3L5 7l4 4z", "M5 3l4 4-4 4z", "M4 3l4 4-4 4zM10 3v8"].map((d, i) => (
          <button key={i} aria-label={`标签滚动 ${i + 1}`} className="flex h-[16px] w-[15px] items-center justify-center border border-[#8a8c92] bg-[#a8aaae]">
            <svg width="12" height="14" viewBox="0 0 13 14"><path d={d} fill="#77797e" stroke="#77797e" /></svg>
          </button>
        ))}
      </div>
      <button className="-mt-1 h-[18px] w-[44px] shrink-0 border-x border-black bg-[#a8aaae] text-[13px] leading-[18px]">模型</button>
      <button className="-mt-1 h-[18px] w-[83px] shrink-0 border-r-2 border-black bg-[#d3d4d9] pr-2 text-xs leading-[18px]">运动算例 3</button>
    </div>
  </section>
);

/* ---------- floating message window ---------- */

const messages = [
  [" command: DEACTIVATE/JO"],
  ["   Deactivated MotionMo", "expression references."],
  [" command: DEACTIVATE/GO"],
  ["   Deactivated MotionMo", "expression references."],
  ["  Time T=0.000000000E+0"],
  ["  Degree-of-"],
];

const MessageWindow = () => (
  <div role="dialog" aria-label="Motion 分析" className="absolute right-5 bottom-12 flex h-[258px] w-[255px] flex-col overflow-hidden rounded-xl border-2 border-[#747b93] bg-[#ecedf2]">
    <div className="flex h-5 shrink-0 items-center border-t-2 border-b-3 border-t-[#9fc4de] border-b-[#a9abb0] bg-[#adb8d0] pl-[3px]">
      <span className="pt-0.5 text-[13px] font-bold text-[#15161a]">Motion 分析</span>
      <button aria-label="关闭" className="mr-1.5 ml-auto flex h-[18px] w-[18px] items-center justify-center border border-[#1c74d8] bg-[#eceee8]">
        <svg width="9" height="9" viewBox="0 0 9 9"><path d="M1 1l7 7M8 1L1 8" stroke="#a0a29c" strokeWidth="2" /></svg>
      </button>
    </div>
    <div className="mt-[9px] mr-1 ml-0.5 flex h-[188px] shrink-0 flex-col border-t border-l-2 border-[#6c6e73]">
      <div className="flex h-[169px]">
        <div className="flex min-w-0 flex-1 flex-col gap-1.5 overflow-hidden pt-1 pl-[3px] font-['Liberation_Mono',monospace] text-[16px] leading-[18px] text-[#1c1d22]">
          {messages.map((p, i) => (
            <p key={i}>
              {p.map((l) => (
                <span key={l} className="block whitespace-pre">{l}</span>
              ))}
            </p>
          ))}
        </div>
        <div className="flex w-4 shrink-0 flex-col items-center pt-3.5">
          <Chevron dir="u" s={13} />
          <div className="mt-[25px] h-4 w-[15px] bg-[#d3d4d9]" />
          <div className="mt-auto pb-4"><Chevron dir="d" s={13} /></div>
        </div>
      </div>
      <div className="flex h-4 items-center pr-8 pl-[15px]">
        <Chevron dir="l" s={13} />
        <div className="ml-1.5 h-[15px] w-[41px] bg-[#d3d4d9]" />
        <span className="ml-auto"><Chevron dir="r" s={13} /></span>
      </div>
    </div>
    <svg className="mt-auto mr-0.5 mb-0.5 ml-auto" width="14" height="14" viewBox="0 0 14 14" aria-hidden="true">
      <path d="M0 13h14M4 9h10M8 5h6M12 1h2" stroke="#a4adc2" strokeWidth="2" strokeDasharray="2 2" />
    </svg>
  </div>
);

export default function App() {
  return (
    <div className="relative flex h-screen min-h-[560px] flex-col overflow-hidden bg-[#ecedf2] font-['Noto_Sans','Noto_Sans_CJK_SC',sans-serif]">
      <Ribbon />
      <main className="relative flex min-h-0 flex-1 flex-col overflow-hidden border-t border-black">
        <Scene />
        <div className="relative flex h-[21px] shrink-0 items-start">
          <CommandTabs />
          <ViewToolbar />
          <WindowButtons />
        </div>
        <div className="relative flex min-h-0 flex-1">
          <FeaturePanel />
          <button aria-label="折叠面板" className="mt-28 flex h-[39px] w-[7px] shrink-0 flex-col items-center justify-center gap-1 border-y-2 border-r-2 border-black bg-[#ecedf2]">
            {[0, 1, 2].map((i) => (
              <svg key={i} width="3" height="5" viewBox="0 0 3 5"><path d="M3 0v5L0 2.500z" fill="#222" /></svg>
            ))}
          </button>
          <TaskPane />
        </div>
      </main>
      <MotionStudy />
      <MessageWindow />
      <svg className="pointer-events-none absolute bottom-[256px] left-[122px]" width="13" height="21" viewBox="0 0 13 21" aria-hidden="true">
        <path d="M1 1v15.500l3.500-3.300L7.500 20l3-1.300L7.700 12H12z" fill="#fff" stroke="#222" />
      </svg>
    </div>
  );
}
